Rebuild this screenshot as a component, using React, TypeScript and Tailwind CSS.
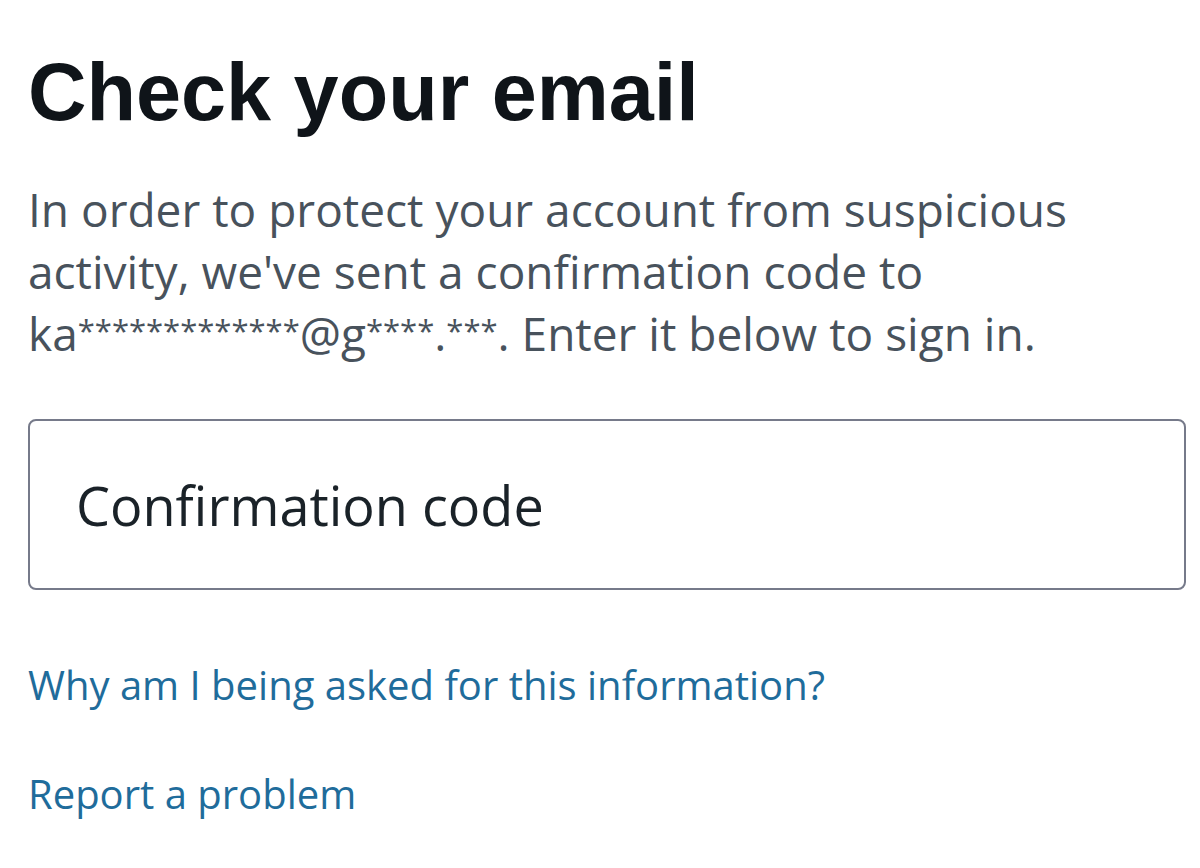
import React from 'react';

const Stars = ({ count }: { count: number }) => (
    <span className="align-[9px] text-[31px] leading-none">{'*'.repeat(count)}</span>
);

export default function App() {
    return (
        <div
            className="flex min-h-screen flex-col bg-white pl-[28px] pr-[14px] pt-[52px]"
            style={{ fontFamily: '"Open Sans", "Liberation Sans", sans-serif' }}
        >
            <h1
                className="text-[81px] font-bold leading-[80px] text-[#0f1419]"
                style={{ fontFamily: '"Liberation Sans", Arial, sans-serif' }}
            >
                Check your email
            </h1>

            <p className="mt-[46px] text-[46px] leading-[62px] text-[#48525c]">
                In order to protect your account from suspicious activity, we've sent a confirmation code to ka
                <Stars count={13} />
                @g
                <Stars count={4} />.
                <Stars count={3} />. Enter it below to sign in.
            </p>

            <div className="mt-[55px] flex h-[171px] items-center rounded-[8px] border-2 border-[#767a8a] pl-[46px]">
                <span className="text-[54px] leading-[60px] text-[#1a2228]">Confirmation code</span>
            </div>

            <div className="mt-[67px] flex flex-col items-start gap-[53px]">
                <a href="#" className="text-[40px] leading-[56px] text-[#1f6c9b]">
                    Why am I being asked for this information?
                </a>
                <a href="#" className="text-[40px] leading-[56px] text-[#1f6c9b]">
                    Report a problem
                </a>
            </div>
        </div>
    );
}
